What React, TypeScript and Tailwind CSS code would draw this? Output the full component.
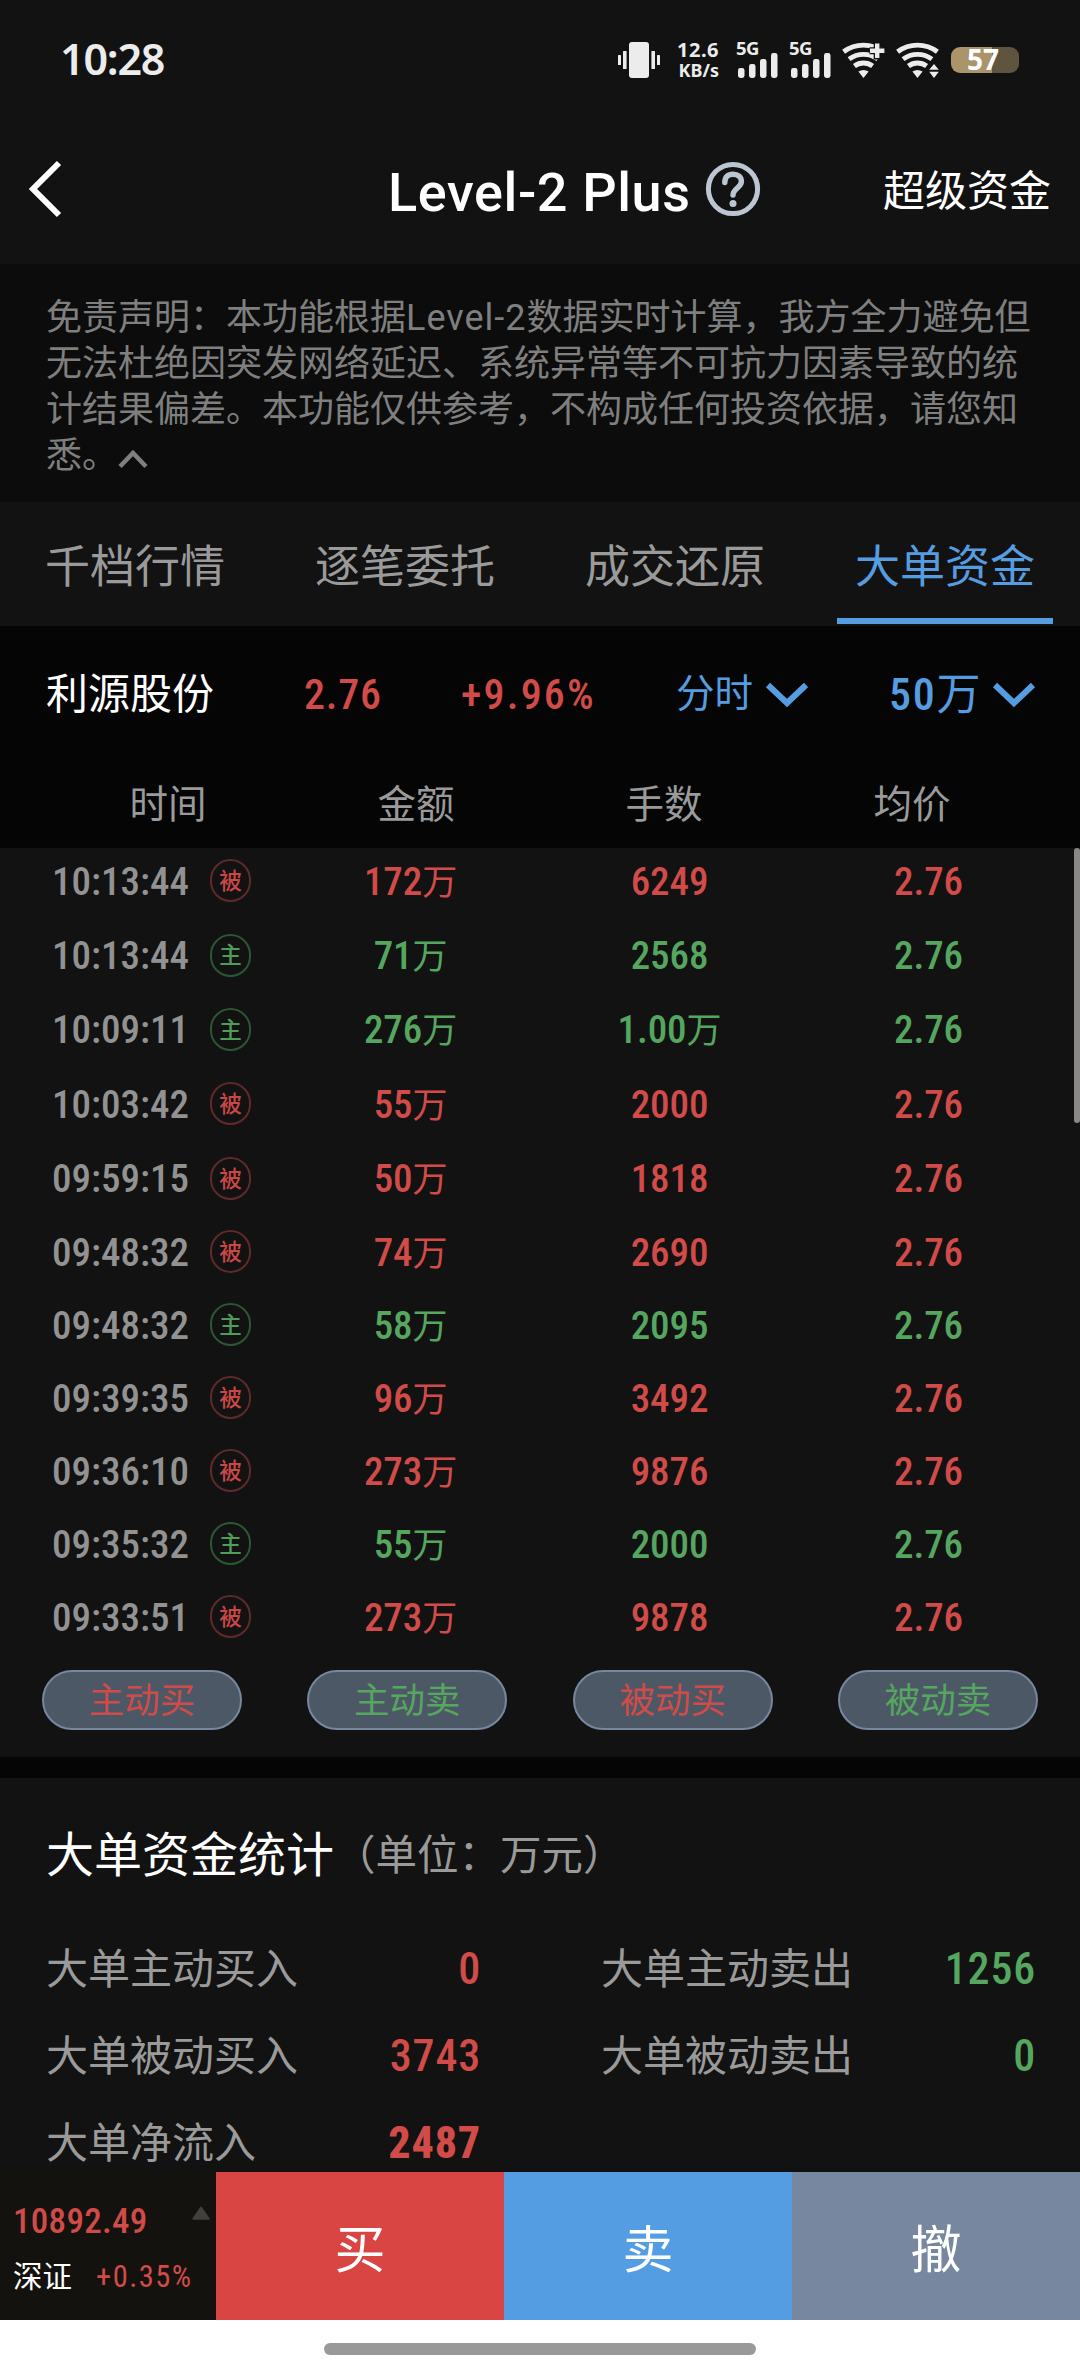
import { clsx } from 'clsx'

type Side = 'active' | 'passive'
type Tone = 'up' | 'down'

interface Deal {
  time: string
  side: Side
  tone: Tone
  amount: string
  lots: string
  price: string
}

const tabs = ['千档行情', '逐笔委托', '成交还原', '大单资金']
const activeTab = '大单资金'

const columns = ['时间', '金额', '手数', '均价']

const deals: Deal[] = [
  { time: '10:13:44', side: 'passive', tone: 'up', amount: '172万', lots: '6249', price: '2.76' },
  { time: '10:13:44', side: 'active', tone: 'down', amount: '71万', lots: '2568', price: '2.76' },
  { time: '10:09:11', side: 'active', tone: 'down', amount: '276万', lots: '1.00万', price: '2.76' },
  { time: '10:03:42', side: 'passive', tone: 'up', amount: '55万', lots: '2000', price: '2.76' },
  { time: '09:59:15', side: 'passive', tone: 'up', amount: '50万', lots: '1818', price: '2.76' },
  { time: '09:48:32', side: 'passive', tone: 'up', amount: '74万', lots: '2690', price: '2.76' },
  { time: '09:48:32', side: 'active', tone: 'down', amount: '58万', lots: '2095', price: '2.76' },
  { time: '09:39:35', side: 'passive', tone: 'up', amount: '96万', lots: '3492', price: '2.76' },
  { time: '09:36:10', side: 'passive', tone: 'up', amount: '273万', lots: '9876', price: '2.76' },
  { time: '09:35:32', side: 'active', tone: 'down', amount: '55万', lots: '2000', price: '2.76' },
  { time: '09:33:51', side: 'passive', tone: 'up', amount: '273万', lots: '9878', price: '2.76' },
]

const filters: { label: string; tone: Tone }[] = [
  { label: '主动买', tone: 'up' },
  { label: '主动卖', tone: 'down' },
  { label: '被动买', tone: 'up' },
  { label: '被动卖', tone: 'down' },
]

const toneText: Record<Tone, string> = {
  up: 'text-[#d14b48]',
  down: 'text-[#55a65f]',
}

function VibrateIcon() {
  return (
    <svg width="42" height="36" viewBox="0 0 42 36" fill="#ececec">
      <rect x="11" y="0" width="20" height="36" rx="3" />
      <rect x="5" y="9" width="3.6" height="18" rx="0.6" />
      <rect x="0" y="13" width="3" height="10" rx="0.6" />
      <rect x="33.4" y="9" width="3.6" height="18" rx="0.6" />
      <rect x="39" y="13" width="3" height="10" rx="0.6" />
    </svg>
  )
}

function Signal() {
  return (
    <div className="relative h-9 w-[42px]">
      <span className="absolute -top-[3px] left-0 text-[18.5px] leading-none font-bold tracking-[-0.5px]">5G</span>
      <svg className="absolute inset-0" width="42" height="36" viewBox="0 0 42 36" fill="#ececec">
        <rect x="2" y="26" width="6.5" height="10" rx="2.4" />
        <rect x="13" y="22" width="6.5" height="14" rx="2.4" />
        <rect x="24" y="17" width="6.5" height="19" rx="2.4" />
        <rect x="35" y="11" width="6.5" height="25" rx="2.4" />
      </svg>
    </div>
  )
}

function Wifi({ badge }: { badge: 'plus' | 'arrows' }) {
  return (
    <svg width="46" height="36" viewBox="0 0 46 36" fill="none" stroke="#ececec" strokeWidth="4.9">
      <path d="M2.6 9.7A33.4 33.4 0 0 1 42.4 9.7" />
      <path d="M8.1 17.1A24.2 24.2 0 0 1 36.9 17.1" />
      <path d="M13.4 24A15.4 15.4 0 0 1 31.6 24" />
      <path d="M22.5 36L17.4 29.4Q22.5 26.4 27.6 29.4Z" fill="#ececec" stroke="none" />
      {badge === 'plus' ? (
        <>
          <path d="M28.5 8.7H46M36.2 0V17.5" stroke="#121212" strokeWidth="7" />
          <path d="M29 8.7H43.4M36.2 1.5V15.9" strokeWidth="4.4" />
        </>
      ) : (
        <>
          <path d="M39 20L45 28.7L39 36L33 28.7Z" fill="#121212" stroke="#121212" strokeWidth="3" />
          <path d="M39 22L43.8 27.8H34.2ZM39 36L34.2 29.8H43.8Z" fill="#ececec" stroke="none" />
        </>
      )}
    </svg>
  )
}

function StatusBar() {
  return (
    <div className="flex h-[120px] items-center justify-between pr-[61px] pl-[60px] font-['Noto_Sans',sans-serif] text-[#ececec]">
      <span className="pb-[3px] text-[43px] leading-none font-semibold tracking-[-1.2px]">10:28</span>
      <div className="flex items-center">
        <VibrateIcon />
        <div className="ml-[15px] flex w-[44px] flex-col items-end font-bold">
          <span className="text-[20px] leading-[20px] tracking-[0.5px]">12.6</span>
          <span className="text-[18px] leading-[20px]">KB/s</span>
        </div>
        <div className="ml-[17px] flex gap-[11px]">
          <Signal />
          <Signal />
        </div>
        <div className="ml-[10px] flex gap-[8px]">
          <Wifi badge="plus" />
          <Wifi badge="arrows" />
        </div>
        <div className="ml-[10px] flex h-[26px] w-[68px] items-center justify-center rounded-[9px] bg-linear-to-r from-[#ab936a] from-60% to-[#5f543f] to-60% pr-1 pb-[2px] text-[28px] leading-none font-bold text-white">
          57
        </div>
      </div>
    </div>
  )
}

function Header() {
  return (
    <header className="flex h-36 items-center px-[29px]">
      <svg className="mr-[325px] mb-[6px]" width="34" height="58" viewBox="0 0 34 58" fill="none" stroke="#fff" strokeWidth="6">
        <path d="M30 3L4 29L30 55" />
      </svg>
      <h1 className="pt-[2px] font-['Roboto',sans-serif] text-[54px] leading-none font-medium tracking-[0.6px]">Level-2 Plus</h1>
      <svg className="mb-[6px] ml-[14px]" width="56" height="56" viewBox="0 0 56 56" fill="none" stroke="#bcc6d3" strokeWidth="5">
        <circle cx="28" cy="28" r="24.6" />
        <path
          d="M19.8 21.5C19.8 16 23 13.2 28 13.2S36.4 16 36.4 20.5C36.4 26.5 28 27.5 28 34"
          strokeLinecap="round"
          strokeWidth="5.4"
        />
        <circle cx="28" cy="42.5" r="3.5" fill="#bcc6d3" stroke="none" />
      </svg>
      <span className="ml-auto pb-[1px] text-[42px] leading-none">超级资金</span>
    </header>
  )
}

function Chevron() {
  return (
    <svg width="44" height="28" viewBox="0 0 44 28" fill="none" stroke="#559de0" strokeWidth="6">
      <path d="M3 4L22 22L41 4" />
    </svg>
  )
}

function Badge({ side, tone }: { side: Side; tone: Tone }) {
  return (
    <span
      className={clsx(
        'mb-[3px] flex h-[43px] w-[41px] items-center justify-center rounded-full border-2 pt-px text-[22.5px] leading-none font-medium',
        tone === 'up' ? 'border-[#5f2a29] text-[#c94846]' : 'border-[#2c5634] text-[#4f9d59]',
      )}
    >
      {side === 'active' ? '主' : '被'}
    </span>
  )
}

function DealRow({ deal, tall }: { deal: Deal; tall: boolean }) {
  return (
    <div
      className={clsx(
        'grid grid-cols-[281px_259px_259px_259px] items-center pb-[6px] text-[39px] leading-none',
        tall ? 'h-[74.4px]' : 'h-[73px]',
        toneText[deal.tone],
      )}
    >
      <div className="flex items-center pl-[52px]">
        <span className="w-[158px] font-medium text-[#929292]">{deal.time}</span>
        <Badge side={deal.side} tone={deal.tone} />
      </div>
      <Figure value={deal.amount} />
      <Figure value={deal.lots} />
      <Figure value={deal.price} />
    </div>
  )
}

// 万 is set smaller and lighter than the digits
function Figure({ value }: { value: string }) {
  const hasUnit = value.endsWith('万')
  return (
    <span className="text-center font-medium tracking-[-0.1px]">
      {hasUnit ? value.slice(0, -1) : value}
      {hasUnit && <span className="text-[35px] font-normal">万</span>}
    </span>
  )
}

function Stat({ label, value, tone, strong }: { label: string; value: string; tone: Tone; strong?: boolean }) {
  return (
    <div className="flex h-[87px] items-center justify-between">
      <span className="pt-[3px] text-[42px] leading-none text-[#9a9a9a]">{label}</span>
      <span className={clsx('-mr-px text-[44px] leading-none tracking-[0.8px]', strong ? 'font-extrabold' : 'font-medium', toneText[tone])}>
        {value}
      </span>
    </div>
  )
}

function TradeBar() {
  return (
    <div className="flex h-[148px] leading-none">
      <div className="flex w-[216px] flex-col bg-[#14120f] pt-[32px] pl-[13px]">
        <div className="flex justify-between pr-[6px]">
          <span className="text-[35px] leading-9 font-medium tracking-[0.3px] text-[#d14b48]">10892.49</span>
          <svg className="mt-[2px]" width="18" height="14" viewBox="0 0 18 14" fill="#42403e" stroke="#42403e" strokeWidth="2" strokeLinejoin="round">
            <path d="M9 1.5L16.7 12.7H1.3Z" />
          </svg>
        </div>
        <div className="mt-[21px] flex items-center">
          <span className="w-[83px] pt-0.5 text-[29.5px]">深证</span>
          <span className="text-[30.5px] tracking-[1.5px] text-[#d14b48]">+0.35%</span>
        </div>
      </div>
      <button className="flex-1 bg-[#d84543] pt-2 text-[51px]">买</button>
      <button className="flex-1 bg-[#549de3] pt-2 text-[51px]">卖</button>
      <button className="flex-1 bg-[#76879f] pt-2 text-[51px]">撤</button>
    </div>
  )
}

export default function App() {
  return (
    <div className="flex h-[2376px] w-[1080px] flex-col overflow-hidden bg-[#121212] font-['Roboto_Condensed','Noto_Sans_CJK_SC',sans-serif] text-white">
      <StatusBar />
      <Header />

      <div className="h-[238px] bg-[#0c0c0c] pt-[31px] pl-[46px] text-[36px] leading-[46px] whitespace-nowrap text-[#7f7f7f]">
        <p>
          免责声明：本功能根据
          <span className="font-['Roboto',sans-serif] tracking-[1px]">Level-2</span>
          数据实时计算，我方全力避免但
        </p>
        <p>无法杜绝因突发网络延迟、系统异常等不可抗力因素导致的统</p>
        <p>计结果偏差。本功能仅供参考，不构成任何投资依据，请您知</p>
        <p className="flex items-center">
          悉。
          <svg className="mt-1.5" width="30" height="20" viewBox="0 0 30 20" fill="none" stroke="#7f7f7f" strokeWidth="4.5">
            <path d="M2 17.5L15 4L28 17.5" />
          </svg>
        </p>
      </div>

      <nav className="flex h-[124px]">
        {tabs.map((tab) => (
          <div
            key={tab}
            className={clsx(
              'relative flex flex-1 items-center justify-center pt-1.5 text-[45px] leading-none',
              tab === activeTab ? 'text-[#559de0]' : 'text-[#9a9a9a]',
            )}
          >
            {tab}
            {tab === activeTab && <span className="absolute bottom-0.5 h-1.5 w-[216px] bg-[#559de0]" />}
          </div>
        ))}
      </nav>

      <section className="h-[222px] bg-[#050505]">
        <div className="flex h-[137px] items-center pl-[46px] text-[42px] leading-none">
          <span className="w-[258px]">利源股份</span>
          <span className="w-[157px] font-medium tracking-[0.8px] text-[#d14b48]">2.76</span>
          <span className="w-[215px] font-medium tracking-[2.2px] text-[#d14b48]">+9.96%</span>
          <span className="flex w-[213px] items-center gap-3 text-[38.5px] text-[#559de0]">
            分时
            <Chevron />
          </span>
          <span className="flex items-center gap-3 text-[44px] text-[#559de0]">
            <span>
              <span className="font-medium tracking-[1.7px]">50</span>万
            </span>
            <Chevron />
          </span>
        </div>
        <div className="grid h-[85px] grid-cols-4 px-11 pt-[23px] text-center text-[38.5px] leading-none text-[#9a9a9a]">
          {columns.map((name) => (
            <span key={name}>{name}</span>
          ))}
        </div>
      </section>

      <section className="relative h-[909px]">
        {deals.map((deal, i) => (
          <DealRow key={i} deal={deal} tall={i < 5} />
        ))}
        <div className="mt-3 flex justify-between px-[42px]">
          {filters.map(({ label, tone }) => (
            <button
              key={label}
              className={clsx(
                'h-[60px] w-[200px] rounded-full border-2 border-[#77879f] bg-[#4d5866] pt-1 text-[35.5px] leading-none',
                toneText[tone],
              )}
            >
              {label}
            </button>
          ))}
        </div>
        <div className="absolute top-0 right-0 h-[275px] w-1.5 rounded-full bg-[#8a8787]" />
      </section>

      <div className="h-[21px] bg-[#050505]" />

      <section className="h-[394px] overflow-hidden pr-[45px] pl-[46px]">
        <h2 className="flex h-[147px] items-center pt-[9px] text-[48px] leading-none">
          大单资金统计
          <span className="text-[41.5px] text-[#9a9a9a]">（单位：万元）</span>
        </h2>
        <div className="grid grid-cols-[434px_434px] justify-between">
          <Stat label="大单主动买入" value="0" tone="up" />
          <Stat label="大单主动卖出" value="1256" tone="down" />
          <Stat label="大单被动买入" value="3743" tone="up" />
          <Stat label="大单被动卖出" value="0" tone="down" />
          <Stat label="大单净流入" value="2487" tone="up" strong />
        </div>
      </section>

      <TradeBar />

      <div className="flex h-14 justify-center bg-white pt-[23px]">
        <div className="h-3 w-[432px] rounded-full bg-[#999]" />
      </div>
    </div>
  )
}
